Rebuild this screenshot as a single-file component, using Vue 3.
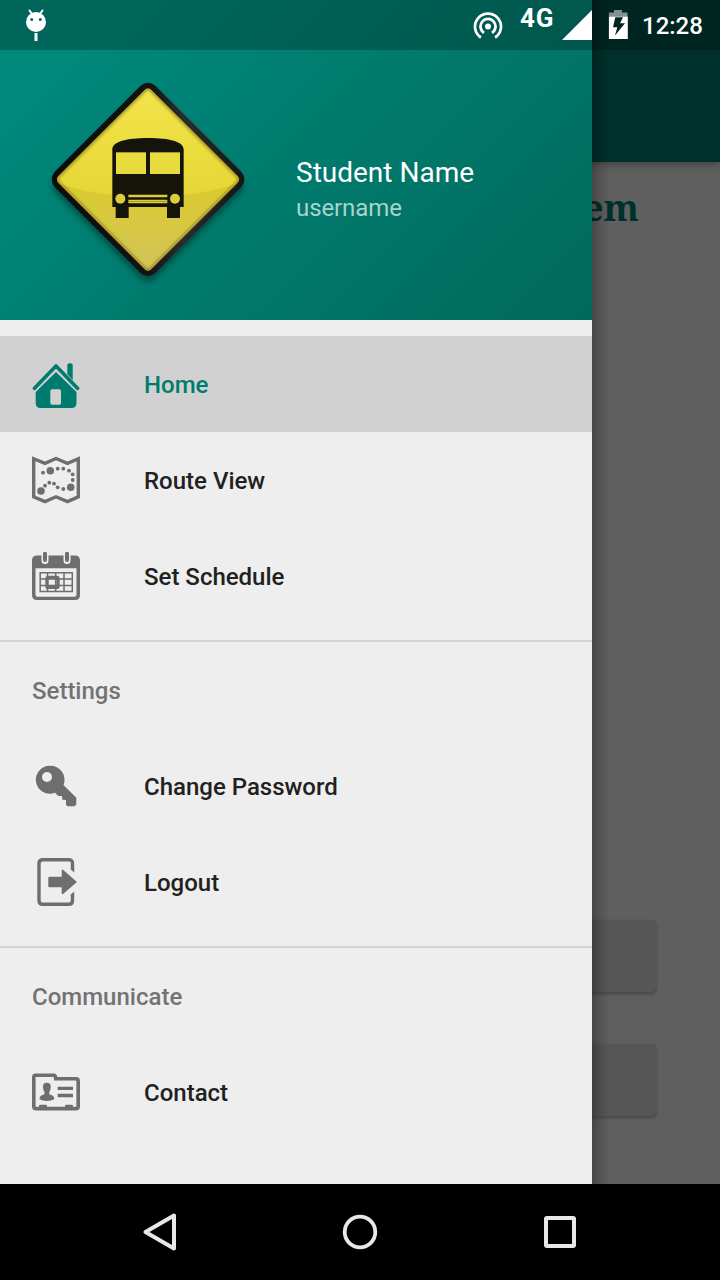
<script setup>
const groups = [
  {
    title: '',
    items: [
      { id: 'home', label: 'Home', active: true },
      { id: 'map', label: 'Route View' },
      { id: 'calendar', label: 'Set Schedule' },
    ],
  },
  {
    title: 'Settings',
    items: [
      { id: 'key', label: 'Change Password' },
      { id: 'logout', label: 'Logout' },
    ],
  },
  { title: 'Communicate', items: [{ id: 'contact', label: 'Contact' }] },
]

// Small and large stops along the route drawn on the map icon
const stops = [
  [11, 16.7, 1.9], [18.3, 14.7, 3.8], [25.7, 12.7, 1.9], [31.3, 12.7, 1.9], [37, 14.7, 1.9],
  [40.7, 18.3, 1.9], [40.7, 24, 1.9], [38.7, 31.3, 3.8], [31.3, 33, 1.9], [25.7, 31.3, 1.9],
  [22, 27.7, 1.9], [17.3, 26.7, 1.9], [13, 29.7, 1.9], [9, 35, 3.8],
]
</script>

<template>
  <div class="phone">
    <main class="page">
      <div class="toolbar"></div>
      <h1 class="title">System</h1>
      <div class="actions">
        <div class="button"></div>
        <div class="button"></div>
      </div>
    </main>

    <aside class="drawer">
      <header class="profile">
        <svg class="sign" viewBox="0 0 660 660">
          <defs>
            <linearGradient id="face" x1="0" y1="0" x2="0" y2="1">
              <stop offset="0" stop-color="#f4e44d" />
              <stop offset="0.55" stop-color="#e6d836" />
              <stop offset="1" stop-color="#e4d63c" />
            </linearGradient>
            <linearGradient id="shade" x1="0" y1="0" x2="0" y2="1">
              <stop offset="0" stop-color="#dccb2e" />
              <stop offset="1" stop-color="#d2c35a" />
            </linearGradient>
            <linearGradient id="rim" x1="0" y1="0" x2="1" y2="0">
              <stop offset="0" stop-color="#0c0c0c" />
              <stop offset="0.5" stop-color="#121212" />
              <stop offset="0.68" stop-color="#2c2c2c" />
              <stop offset="1" stop-color="#151515" />
            </linearGradient>
            <clipPath id="faceClip"><path d="M314 60Q324 50 334 60L593 318Q602 328 593 338L334 597Q324 607 314 597L55 338Q46 328 55 318Z" /></clipPath>
            <filter id="soft" x="-10%" y="-10%" width="120%" height="125%"><feGaussianBlur stdDeviation="9" /></filter>
            <filter id="edge"><feGaussianBlur stdDeviation="5" /></filter>
          </defs>
          <path d="M301 72Q324 50 347 72L602 328Q620 350 602 370L347 625Q324 647 301 625L46 370Q28 352 46 328Z" fill="#002c26" opacity="0.55" filter="url(#soft)" />
          <path d="M301 48Q324 28 347 48L604 305Q622 328 604 351L347 608Q324 628 301 608L44 351Q26 328 44 305Z" fill="url(#rim)" />
          <g clip-path="url(#faceClip)">
            <rect x="40" y="45" width="570" height="570" fill="url(#face)" />
            <path d="M40 336Q170 380 324 380T610 336V610H40Z" fill="url(#shade)" />
            <path d="M314 60Q324 50 334 60L593 318Q602 328 593 338L334 597Q324 607 314 597L55 338Q46 328 55 318Z" fill="none" stroke="#6d6310" stroke-width="10" opacity="0.65" filter="url(#edge)" />
          </g>
          <path d="M217 411V238C217 215 260 204 324 204S431 215 431 238V411H420V444H381V411H266V444H227V411Z" fill="#14140a" />
          <rect x="228" y="247" width="90" height="65" fill="#e9db3d" />
          <rect x="330" y="247" width="90" height="65" fill="#e9db3d" />
          <circle cx="241" cy="386" r="15" fill="#dccc3a" />
          <circle cx="405" cy="386" r="15" fill="#dccc3a" />
          <path d="M265 374H382V382H265ZM265 389H382V400H265Z" fill="#dccc3a" />
          <path d="M265 394.500H382" stroke="#77701f" stroke-width="1.500" />
        </svg>
        <div class="who">
          <div class="name">Student Name</div>
          <div class="user">username</div>
        </div>
      </header>

      <nav class="menu">
        <section v-for="group in groups" :key="group.title" class="group">
          <h2 v-if="group.title" class="subheader">{{ group.title }}</h2>
          <div v-for="item in group.items" :key="item.id" class="item" :class="{ active: item.active }">
            <svg class="icon" viewBox="0 0 48 48">
              <g v-if="item.id === 'home'">
                <path d="M2.500 28.300 24 6 45.500 28.300" fill="none" stroke="currentColor" stroke-width="3.700" stroke-linecap="round" stroke-linejoin="round" />
                <path d="M35.300 14V5.500Q35.300 3.300 37.500 3.300H38.500Q40.700 3.300 40.700 5.500V20Z" fill="currentColor" />
                <path fill-rule="evenodd" d="M24 12 44.500 32V43Q44.500 48 39.500 48H8.500Q3.700 48 3.700 43V32ZM20 29.300Q18.300 29.300 18.300 31V43Q18.300 44.700 20 44.700H27.300Q29 44.700 29 43V31Q29 29.300 27.300 29.300Z" fill="currentColor" />
              </g>
              <g v-else-if="item.id === 'map'">
                <path d="M1.700 2.700 13 7.300 24 2.500 35.500 7.300 46.300 2.700V40.800L35.500 45.600 24 40.800 13 45.600 1.700 40.800Z" fill="none" stroke="currentColor" stroke-width="3.400" />
                <circle v-for="(s, i) in stops" :key="i" :cx="s[0]" :cy="s[1]" :r="s[2]" fill="currentColor" />
              </g>
              <g v-else-if="item.id === 'calendar'">
                <path fill-rule="evenodd" d="M5 3.500H43Q48 3.500 48 8.500V43Q48 48 43 48H5Q0 48 0 43V8.500Q0 3.500 5 3.500ZM3.500 16.300V42.500Q3.500 44.700 5.700 44.700H42.300Q44.500 44.700 44.500 42.500V16.300Z" fill="currentColor" />
                <path d="M13 2V8.500M35 2V8.500" stroke="#eee" stroke-width="7" stroke-linecap="round" />
                <path d="M13 1.700V8M35 1.700V8" stroke="currentColor" stroke-width="4" stroke-linecap="round" />
                <path d="M8.200 20.800H40.300V39.600H8.200ZM15.500 20.800V39.600M23.700 20.800V39.600M32 20.800V39.600M8.200 27H40.300M8.200 33.400H40.300" fill="none" stroke="currentColor" stroke-width="1.500" />
                <rect x="15" y="25.400" width="11" height="10" rx="1" fill="none" stroke="currentColor" stroke-width="3.300" />
              </g>
              <g v-else-if="item.id === 'key'">
                <path fill-rule="evenodd" d="M18 3.700A14 14 0 0 1 31.500 23L44.300 35.700V42.500L42.500 44.300H35.500L34 42.700V38L30.300 37.700 30 34H26.300L23 30.700A14 14 0 1 1 18 3.700ZM15 10A5 5 0 1 0 15 20A5 5 0 1 0 15 10Z" fill="currentColor" />
              </g>
              <g v-else-if="item.id === 'logout'">
                <path d="M40.500 11.500V5.500Q40.500 1.700 36.700 1.700H10.800Q7 1.700 7 5.500V42.500Q7 46.300 10.800 46.300H36.700Q40.500 46.300 40.500 42.500V36.500" fill="none" stroke="currentColor" stroke-width="3.400" />
                <path d="M38.800 10.500H42.200V14.500L38.800 11.500ZM38.800 36.500 42.200 33.500V37.500H38.800Z" fill="currentColor" />
                <path d="M17.500 18.700H29.700V11.700H31L45 24 31 36H29.700V29.300H17.500Q16.300 29.300 16.300 28V20Q16.300 18.700 17.500 18.700Z" fill="currentColor" />
              </g>
              <g v-else>
                <path d="M3.500 7.300H21.500Q23.700 7.300 23.700 10.800H44Q46.200 10.800 46.200 13V38.500Q46.200 40.600 44 40.600H4Q1.800 40.600 1.800 38.500V9Q1.800 7.300 3.500 7.300Z" fill="none" stroke="currentColor" stroke-width="3.600" />
                <path d="M7 40V37.800Q7 36.700 8.200 36.700H13.800Q15 36.700 15 37.800V40ZM33 40V37.800Q33 36.700 34.200 36.700H39.800Q41 36.700 41 37.800V40ZM25.700 18.700H41V22H25.700ZM25.700 25.700H41V29.200H25.700Z" fill="currentColor" />
                <path d="M14.800 14.800Q19 14.800 18.800 19.200 18.600 22.300 17.300 24V26.300L20.500 27.500Q22.500 28.500 22.300 31.300 19 33 14.800 33T7.500 31.300Q7.300 28.500 9.300 27.500L12.500 26.300V24Q11.100 22.300 10.900 19.200 10.700 14.800 14.800 14.800Z" fill="currentColor" />
              </g>
            </svg>
            <span>{{ item.label }}</span>
          </div>
        </section>
      </nav>
    </aside>

    <div class="status">
      <svg class="debug" viewBox="0 0 24 34">
        <path d="M5.500 1.500 8 5M18.500 1.500 16 5" stroke="#fff" stroke-width="2" stroke-linecap="round" />
        <path fill-rule="evenodd" d="M12 3A10 10 0 1 1 12 23A10 10 0 1 1 12 3ZM7.700 8.900A1.500 1.500 0 1 0 7.700 11.900A1.500 1.500 0 1 0 7.700 8.900ZM16.300 8.900A1.500 1.500 0 1 0 16.300 11.900A1.500 1.500 0 1 0 16.300 8.900Z" fill="#fff" />
        <path d="M10.500 24H13.500V32H10.500Z" fill="#fff" />
      </svg>
      <div class="tray">
        <svg class="hotspot" viewBox="0 0 30 30">
          <circle cx="15" cy="15.500" r="3" fill="#fff" />
          <path d="M11 21.800A7.500 7.500 0 1 1 19 21.800M7.900 26.500A13 13 0 1 1 22.100 26.500" fill="none" stroke="#fff" stroke-width="2.700" />
        </svg>
        <span class="network">4G</span>
        <svg class="signal" viewBox="0 0 30 30"><path d="M30 0V30H0Z" fill="#fff" /></svg>
        <svg class="battery" viewBox="0 0 20 30">
          <path d="M6 0H14V2.500H19.500V6.500H.9V2.500H6Z" fill="#fff" opacity="0.5" />
          <path fill-rule="evenodd" d="M.9 6.500H19.800V29H.9ZM7.300 7.300 5 17.300H9.300L7 25.500 17 13.300H12L15 7.300Z" fill="#fff" />
        </svg>
        <span class="clock">12:28</span>
      </div>
    </div>

    <footer class="navbar">
      <svg viewBox="0 0 40 40"><path d="M34 3.500V36.500L5.500 20Z" fill="none" stroke="#e8e8e8" stroke-width="4" stroke-linejoin="round" /></svg>
      <svg viewBox="0 0 40 40"><circle cx="20" cy="20" r="15.300" fill="none" stroke="#e8e8e8" stroke-width="3.800" /></svg>
      <svg viewBox="0 0 40 40"><rect x="6" y="6" width="28" height="28" rx="1" fill="none" stroke="#e8e8e8" stroke-width="4" /></svg>
    </footer>
  </div>
</template>

<style>
body {
  margin: 0;
  background: #000;
}
</style>

<style scoped>
.phone {
  position: relative;
  width: 720px;
  height: 1280px;
  overflow: hidden;
  display: flex;
  flex-direction: column;
  font-family: Roboto, "Liberation Sans", sans-serif;
}
.page {
  height: 1184px;
  background: #5f5f5f;
  display: flex;
  flex-direction: column;
  flex: none;
}
.toolbar {
  height: 162px;
  flex: none;
  background: #00302b;
  box-shadow: 0 2px 8px rgba(0, 0, 0, 0.35);
}
.title {
  margin: 22px 81px 0 0;
  text-align: right;
  font: bold 36px/48px "Noto Serif", "DejaVu Serif", serif;
  font-stretch: condensed;
  color: #00302b;
}
.actions {
  margin-top: auto;
  padding: 0 63px 68px;
  display: flex;
  flex-direction: column;
  gap: 52px;
}
.button {
  height: 72px;
  border-radius: 6px;
  background: #565656;
  box-shadow: 0 3px 2px rgba(0, 0, 0, 0.16), 0 0 2px rgba(0, 0, 0, 0.15);
}
.drawer {
  position: absolute;
  top: 0;
  left: 0;
  width: 592px;
  height: 1184px;
  background: #eee;
}
.drawer::after {
  content: "";
  position: absolute;
  top: 0;
  left: 100%;
  width: 18px;
  height: 100%;
  background: linear-gradient(90deg, rgba(0, 0, 0, 0.27), rgba(0, 0, 0, 0.1) 50%, transparent);
}
.profile {
  box-sizing: border-box;
  height: 320px;
  padding: 70px 0 0 40px;
  display: flex;
  align-items: flex-start;
  background: linear-gradient(135deg, #00897b 0%, #00897b 12%, #00695c 100%);
}
.sign {
  width: 220px;
  height: 220px;
  flex: none;
}
.who {
  margin: 85px 0 0 36px;
}
.name {
  font-size: 28px;
  line-height: 36px;
  color: #fff;
}
.user {
  font-size: 24px;
  line-height: 34px;
  color: #a9d3cd;
  letter-spacing: -0.1px;
}
.menu {
  font-size: 24px;
  font-weight: 500;
}
.group {
  padding-bottom: 16px;
}
.group:first-child {
  padding-top: 16px;
}
.group + .group {
  border-top: 2px solid #d4d4d4;
}
.subheader {
  margin: 0;
  padding-left: 32px;
  font-size: 24px;
  font-weight: 500;
  line-height: 98px;
  height: 96px;
  color: #737373;
}
.item {
  height: 96px;
  padding-left: 32px;
  display: flex;
  align-items: center;
  gap: 64px;
  color: #212121;
}
.item span {
  padding-top: 2px;
}
.icon {
  width: 48px;
  height: 48px;
  color: #6e6e6e;
}
.active {
  background: #d1d1d1;
}
.active,
.active .icon {
  color: #007c6e;
}
.status {
  position: absolute;
  top: 0;
  left: 0;
  right: 0;
  height: 50px;
  padding-left: 24px;
  display: flex;
  justify-content: space-between;
  background: rgba(0, 0, 0, 0.25);
  color: #fff;
}
.debug {
  width: 24px;
  height: 34px;
  margin-top: 9px;
}
.tray {
  display: flex;
  align-items: flex-start;
  padding-right: 16px;
}
.hotspot {
  width: 30px;
  height: 30px;
  margin: 11px 17px 0 0;
}
.network {
  width: 42px;
  font-size: 26px;
  font-weight: 700;
  line-height: 37px;
  letter-spacing: 0.8px;
}
.signal {
  width: 30px;
  height: 30px;
  margin-top: 10px;
}
.battery {
  width: 20px;
  height: 30px;
  margin: 10px 14px 0 16px;
}
.clock {
  width: 62px;
  font-size: 24px;
  font-weight: 500;
  line-height: 53px;
}
.navbar {
  height: 96px;
  display: flex;
  align-items: center;
  justify-content: center;
  gap: 160px;
  background: #000;
}
.navbar svg {
  width: 40px;
  height: 40px;
}
</style>
